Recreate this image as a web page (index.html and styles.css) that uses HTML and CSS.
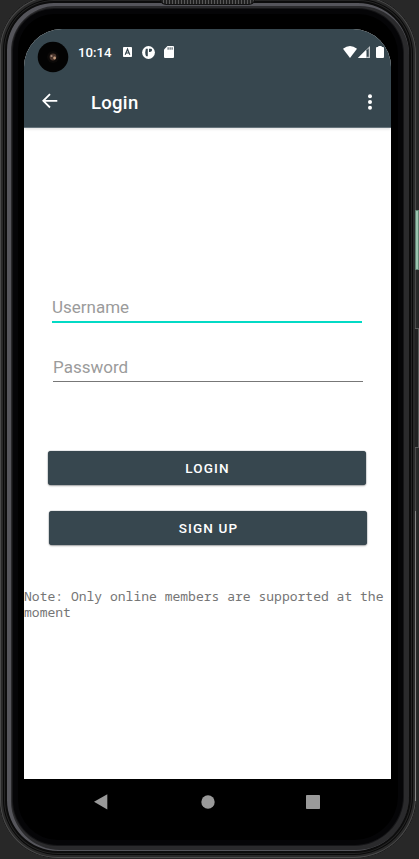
FILE: index.html
```html
<!DOCTYPE html>
<html lang="en">
<head>
<meta charset="utf-8">
<title>Login</title>
<link rel="stylesheet" href="styles.css">
</head>
<body>
<div class="device">
  <div class="speaker"></div>
  <div class="screen">
    <header class="top">
      <div class="status">
        <svg class="camera" width="32" height="32" viewBox="0 0 32 32"><circle cx="16" cy="16" r="15.3" fill="#030303"/><circle cx="16" cy="16" r="6" fill="#0b0908"/><circle cx="16" cy="16" r="3.4" fill="#49352c"/><circle cx="14.5" cy="15" r="1.1" fill="#a58a7a"/><circle cx="17.6" cy="17" r="1.4" fill="#c19a7c"/></svg>
        <span class="clock">10:14</span>
        <svg class="alpha" width="9" height="10" viewBox="0 0 9 10"><rect width="9" height="10" rx=".8" fill="#fff"/><path d="M2.2 7.8 4.5 2.2 6.8 7.8M3.2 6h2.6" fill="none" stroke="#37474f" stroke-width="1.2"/></svg>
        <svg class="round" width="13" height="13" viewBox="0 0 13 13"><circle cx="6.5" cy="6.5" r="6.4" fill="#fff"/><path d="M3.8 2.8h2v7.5H4.3Q3.2 9 3.2 6.5zM7 2.8h2.2Q10.3 3 10 4.6 9.5 6 8 6H7z" fill="#37474f"/></svg>
        <svg class="sd" width="10" height="12" viewBox="0 0 10 12"><path d="M3.5 0H9q1 0 1 1v10q0 1-1 1H1q-1 0-1-1V3.5z" fill="#fff"/><path d="M4.1 1.3v2.4M6.1 1.3v2.4M8.1 1.3v2.4" stroke="#37474f" stroke-width="1"/></svg>
        <svg class="wifi" width="14" height="12" viewBox="0 0 14 12"><path d="M0 2.8Q7-2.6 14 2.8L7 12z" fill="#fff"/></svg>
        <svg class="signal" width="12" height="12" viewBox="0 0 12 12"><path d="M12 0v12H0z" fill="#c3c8ca"/><path d="M8 4v8H0z" fill="#fff"/><path d="M8.7 4.2 10.7 2.3v8.4h-2z" fill="#37474f"/></svg>
        <svg class="battery" width="8" height="12" viewBox="0 0 8 12"><path d="M2.3 0h3.4v1H7q1 0 1 1v9q0 1-1 1H1q-1 0-1-1V2q0-1 1-1h1.3z" fill="#fff"/></svg>
      </div>
      <div class="appbar">
        <svg class="back" width="16" height="16" viewBox="0 0 16 16"><path d="M15.3 7.8H1.7M8 1.1 1.3 7.8 8 14.5" fill="none" stroke="#fff" stroke-width="1.8"/></svg>
        <h1>Login</h1>
        <svg class="more" width="4" height="16" viewBox="0 0 4 16"><g fill="#fff"><circle cx="2" cy="2.3" r="2"/><circle cx="2" cy="8" r="2"/><circle cx="2" cy="13.7" r="2"/></g></svg>
      </div>
    </header>
    <main>
      <div class="field active">Username</div>
      <div class="field password">Password</div>
      <button class="btn">LOGIN</button>
      <button class="btn signup">SIGN UP</button>
      <p class="note">Note: Only online members are supported at the moment</p>
    </main>
  </div>
  <nav>
    <svg class="nav-back" width="14" height="16" viewBox="0 0 14 16"><path d="M13.3.2v15.3L0 7.8z" fill="#999"/></svg>
    <svg class="nav-home" width="14" height="14" viewBox="0 0 14 14"><circle cx="7" cy="7" r="6.7" fill="#999"/></svg>
    <svg class="nav-recent" width="14" height="14" viewBox="0 0 14 14"><rect width="14" height="14" rx=".7" fill="#999"/></svg>
  </nav>
  <i class="side power"></i><i class="side volume"></i><i class="side edge"></i>
</div>
</body>
</html>
```
FILE: styles.css
```css
* { box-sizing: border-box; }
body { margin: 0; height: 859px; overflow: hidden; background: #282828; font-family: Roboto, sans-serif; }
.device {
  position: relative;
  width: 416px;
  height: 862px;
  margin-top: -4px;
  padding: 33px 24px 0;
  border-radius: 54px 58px 62px 58px;
  background: #000;
  box-shadow:
    inset 0 0 0 1px #4a4a4a,
    inset 0 0 0 3px #292929,
    inset 0 0 0 4px #090909,
    inset 0 0 0 5px #242424,
    inset 0 0 0 7px #0c0c0c,
    inset 2px 1px 0 9px #55555b,
    inset 0 0 0 12px #2a2a2c,
    inset 0 0 0 13px #151517,
    inset 0 0 0 18px #050507;
}
.speaker {
  position: absolute;
  top: 3px;
  left: 160px;
  width: 95px;
  height: 6px;
  border: 1px solid #111;
  border-radius: 0 0 6px 6px;
  background: repeating-linear-gradient(90deg, #222 0 2px, #585858 2px 3px);
}
.screen { width: 367px; height: 750px; background: #fff; border-radius: 38px 38px 0 0; overflow: hidden; }
.top { height: 99px; background: #37474f; border-bottom: 1px solid #65737b; box-shadow: 0 1px 3px #0002; }
.status { display: flex; height: 46px; align-items: center; color: #fff; }
.camera { margin: 9px 0 0 13px; }
.clock { width: 35px; margin: 1px 0 0 9px; font-size: 13.2px; font-weight: 500; line-height: 16px; white-space: nowrap; }
.alpha { margin-left: 10px; }
.round { margin-left: 10px; }
.sd { margin-left: 9px; }
.wifi { margin-left: auto; }
.signal { margin-left: 1px; }
.battery { margin: 0 7px 0 6px; }
.appbar { display: flex; height: 53px; align-items: center; }
.back { margin: 0 0 2px 18px; }
h1 { margin: 2px 0 0 33px; color: #fff; font-size: 18.5px; font-weight: 500; line-height: 24px; letter-spacing: .3px; }
.more { margin: 0 19px 0 auto; }
main { display: flex; flex-direction: column; padding-top: 167px; }
.field { width: 310px; height: 28px; margin-left: 28px; border-bottom: 2px solid #03dac5; color: #9b9b9b; font-size: 17px; line-height: 24px; }
.password { height: 26px; margin: 33px 0 0 29px; border-bottom: 1px solid #777; line-height: 23px; }
.btn { width: 318px; height: 34px; margin: 69px 0 0 24px; padding: 0 0 0 1px; border: 0; border-radius: 3px; background: #37474f; color: #fff; box-shadow: 0 1px 2px #0005, 0 0 1px #37474f; font: 500 13.5px/34px Roboto, sans-serif; letter-spacing: 1.15px; }
.signup { margin: 25.5px 0 0 25px; }
.note { margin: 43.5px 0 0; color: #757575; font: 13px/16px "Noto Sans Mono", "Droid Sans Mono", "DejaVu Sans Mono", monospace; letter-spacing: .015px; }
nav { display: flex; align-items: center; height: 46px; padding-left: 70px; }
.nav-home { margin-left: 93px; }
.nav-recent { margin-left: 91px; }
.side { position: absolute; left: 415px; width: 4px; }
.power { top: 214px; height: 60px; border: 1px solid #658475; background: #9bc4ae; }
.volume { top: 332px; height: 120px; border: 1px solid #5b5b5b; border-left: 0; background: #222; }
.edge { top: 515px; width: 1px; height: 290px; background: #858585; }
```
